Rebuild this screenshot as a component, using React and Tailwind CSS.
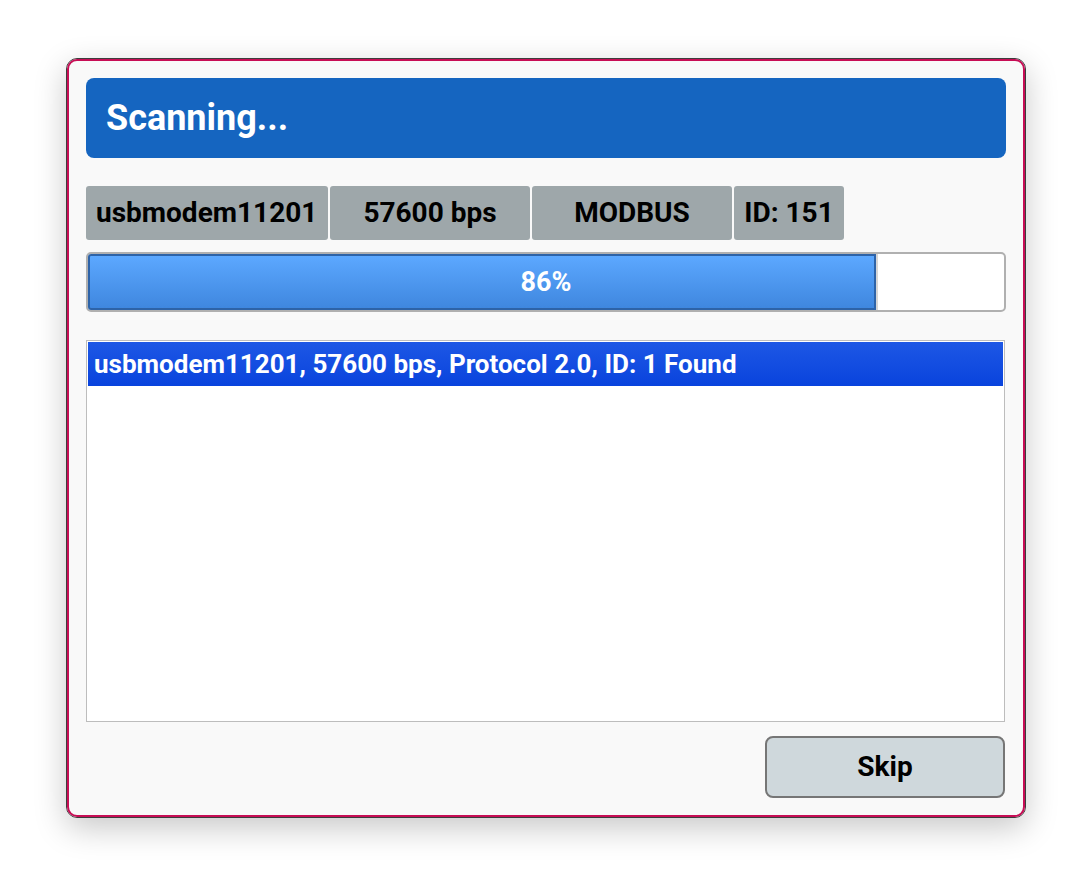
export default function App() {
  const font = { fontFamily: 'Roboto, "Liberation Sans", sans-serif' };
  return (
    <div className="w-[1092px] h-[892px] bg-white" style={font}>
      <div className="pl-[66px] pt-[58px]">
        <div className="w-[960px] h-[760px] rounded-[11px] border border-[#3d3d3d] shadow-[0_10px_32px_rgba(0,0,0,0.22)]">
          <div className="h-full rounded-[10px] border-2 border-[#c70d55] bg-[#f9f9f9] px-[17px] pt-[17px] flex flex-col">
            <div className="h-[80px] rounded-[8px] bg-[#1565c0] flex items-center pl-[20px] pb-[1px]">
              <span className="text-white font-bold text-[36px] leading-none">Scanning...</span>
            </div>
            <div className="mt-[28px] flex gap-[2px] h-[54px]">
              <div className="bg-[#9ea7aa] rounded-[3px] w-[242px] pl-[10px] flex items-center text-[28px] font-bold text-black whitespace-nowrap">usbmodem11201</div>
              <div className="bg-[#9ea7aa] rounded-[3px] w-[200px] flex items-center justify-center text-[28px] font-bold text-black">57600 bps</div>
              <div className="bg-[#9ea7aa] rounded-[3px] w-[200px] flex items-center justify-center text-[28px] font-bold text-black">MODBUS</div>
              <div className="bg-[#9ea7aa] rounded-[3px] w-[110px] flex items-center justify-center text-[28px] font-bold text-black whitespace-nowrap">ID: 151</div>
            </div>
            <div className="mt-[12px] relative h-[60px] w-[920px] rounded-[5px] border-2 border-[#b0b0b0] bg-white flex">
              <div className="w-[86%] h-full rounded-l-[3px] border-2 border-[#2d63a8] bg-gradient-to-b from-[#5ca8ff] to-[#3f87df]"></div>
              <div className="w-[2px] h-full bg-[#d6d6d6]"></div>
              <div className="absolute inset-0 flex items-center justify-center text-white font-bold text-[27px]">86%</div>
            </div>
            <div className="mt-[28px] h-[382px] w-[919px] border border-[#bdbdbd] bg-white p-[1px]">
              <div className="h-[44px] bg-gradient-to-b from-[#1d57e5] to-[#0943dd] flex items-center pl-[6px] text-white font-bold text-[26px]">
                usbmodem11201, 57600 bps, Protocol 2.0, ID: 1 Found
              </div>
            </div>
            <div className="mt-[14px] flex justify-end pr-[1px]">
              <div className="w-[240px] h-[62px] rounded-[8px] border-2 border-[#767676] bg-[#cfd8dc] flex items-center justify-center text-[28px] font-bold text-black">
                Skip
              </div>
            </div>
          </div>
        </div>
      </div>
    </div>
  );
}
